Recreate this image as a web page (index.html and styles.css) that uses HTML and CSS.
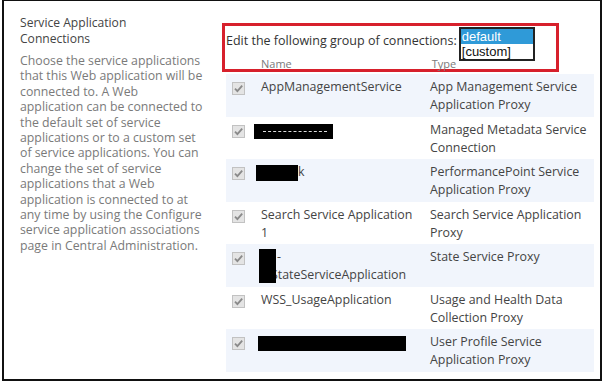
FILE: index.html
```html
<!DOCTYPE html>
<html lang="en">
<head>
    <meta charset="UTF-8">
    <title>Service Application Connections</title>
    <link rel="stylesheet" href="styles.css">
</head>
<body>
    <div class="frame">
        <div class="section-info">
            <h3>Service Application Connections</h3>
            <p>Choose the service applications that this Web application will be connected to. A Web application can be connected to the default set of service applications or to a custom set of service applications. You can change the set of service applications that a Web application is connected to at any time by using the Configure service application associations page in Central Administration.</p>
        </div>
        <div class="section-body">
            <div class="group-box">
                <div class="group-line">
                    <span class="group-label">Edit the following group of connections:</span>
                    <div class="listbox">
                        <div class="opt selected">default</div>
                        <div class="opt">[custom]</div>
                    </div>
                </div>
                <div class="col-heads">
                    <span class="head-name">Name</span>
                    <span class="head-type">Type</span>
                </div>
            </div>

            <div class="rows">
                <div class="row alt">
                    <div class="chk"><svg viewBox="0 0 13 13"><rect x="0.5" y="0.5" width="12" height="12" fill="#e4e4e4" stroke="#c2c2c2"/><path d="M3 6.6 L5.4 9.2 L10.2 3.6" fill="none" stroke="#8a8a8a" stroke-width="1.8"/></svg></div>
                    <div class="name">AppManagementService</div>
                    <div class="type">App Management Service Application Proxy</div>
                </div>
                <div class="row">
                    <div class="chk"><svg viewBox="0 0 13 13"><rect x="0.5" y="0.5" width="12" height="12" fill="#e4e4e4" stroke="#c2c2c2"/><path d="M3 6.6 L5.4 9.2 L10.2 3.6" fill="none" stroke="#8a8a8a" stroke-width="1.8"/></svg></div>
                    <div class="name"><span class="redact r-mm"><span class="dash"></span></span></div>
                    <div class="type">Managed Metadata Service Connection</div>
                </div>
                <div class="row alt">
                    <div class="chk"><svg viewBox="0 0 13 13"><rect x="0.5" y="0.5" width="12" height="12" fill="#e4e4e4" stroke="#c2c2c2"/><path d="M3 6.6 L5.4 9.2 L10.2 3.6" fill="none" stroke="#8a8a8a" stroke-width="1.8"/></svg></div>
                    <div class="name"><span class="redact r-pp"></span>k</div>
                    <div class="type">PerformancePoint Service Application Proxy</div>
                </div>
                <div class="row">
                    <div class="chk"><svg viewBox="0 0 13 13"><rect x="0.5" y="0.5" width="12" height="12" fill="#e4e4e4" stroke="#c2c2c2"/><path d="M3 6.6 L5.4 9.2 L10.2 3.6" fill="none" stroke="#8a8a8a" stroke-width="1.8"/></svg></div>
                    <div class="name">Search Service Application 1</div>
                    <div class="type">Search Service Application Proxy</div>
                </div>
                <div class="row alt">
                    <div class="chk"><svg viewBox="0 0 13 13"><rect x="0.5" y="0.5" width="12" height="12" fill="#e4e4e4" stroke="#c2c2c2"/><path d="M3 6.6 L5.4 9.2 L10.2 3.6" fill="none" stroke="#8a8a8a" stroke-width="1.8"/></svg></div>
                    <div class="name covered"><span class="dash-first">-</span><br><span class="second-line">StateServiceApplication</span><span class="redact r-ss"></span></div>
                    <div class="type">State Service Proxy</div>
                </div>
                <div class="row">
                    <div class="chk"><svg viewBox="0 0 13 13"><rect x="0.5" y="0.5" width="12" height="12" fill="#e4e4e4" stroke="#c2c2c2"/><path d="M3 6.6 L5.4 9.2 L10.2 3.6" fill="none" stroke="#8a8a8a" stroke-width="1.8"/></svg></div>
                    <div class="name">WSS_UsageApplication</div>
                    <div class="type">Usage and Health Data Collection Proxy</div>
                </div>
                <div class="row alt">
                    <div class="chk"><svg viewBox="0 0 13 13"><rect x="0.5" y="0.5" width="12" height="12" fill="#e4e4e4" stroke="#c2c2c2"/><path d="M3 6.6 L5.4 9.2 L10.2 3.6" fill="none" stroke="#8a8a8a" stroke-width="1.8"/></svg></div>
                    <div class="name"><span class="redact r-up"></span></div>
                    <div class="type">User Profile Service Application Proxy</div>
                </div>
            </div>
        </div>
    </div>
</body>
</html>
```

FILE: styles.css
```css
html, body {
    margin: 0;
    padding: 0;
    background: #fff;
}
body {
    font-family: "Open Sans", "Noto Sans", sans-serif;
    color: #444;
}
.frame {
    box-sizing: border-box;
    width: 600px;
    height: 381px;
    margin-left: 2px;
    border: 2px solid #111;
    border-top-width: 1px;
    display: flex;
}
.section-info {
    width: 182px;
    padding: 14px 0 0 16px;
    box-sizing: content-box;
}
.section-info h3 {
    margin: 0;
    max-width: 150px;
    font-size: 12.1px;
    font-weight: normal;
    line-height: 16px;
    color: #444;
}
.section-info p {
    margin: 6px 0 0;
    width: 184px;
    font-size: 12.3px;
    line-height: 15.4px;
    color: #7a7a7a;
}
.section-body {
    margin-left: 24px;
    width: 368px;
    padding-top: 22px;
}
.group-box {
    box-sizing: border-box;
    width: 337px;
    height: 49px;
    margin-left: -4px;
    border: 3px solid #d7202c;
    padding: 1px 0 0 1px;
}
.group-line {
    display: flex;
    align-items: flex-start;
}
.group-label {
    font-size: 12.5px;
    color: #333;
    line-height: 18px;
    margin-top: 5px;
}
.listbox {
    margin-left: 2px;
    width: 72px;
    border: 2px solid #222;
    font-family: "Liberation Sans", Arial, sans-serif;
    font-size: 13px;
    line-height: 15px;
    color: #111;
}
.opt {
    padding-left: 1px;
}
.opt.selected {
    background: #2f9ad8;
    color: #fff;
}
.col-heads {
    display: flex;
    font-size: 11px;
    color: #7a7a7a;
    line-height: 12px;
    margin-top: -3px;
}
.head-name {
    margin-left: 35px;
}
.head-type {
    margin-left: 140px;
}
.rows {
    margin-top: 2px;
}
.row {
    display: grid;
    grid-template-columns: 35px 169px 1fr;
    height: 42.5px;
    box-sizing: border-box;
    padding-top: 4px;
    font-size: 12.4px;
    line-height: 18px;
}
.row.alt {
    background: #f1f5fc;
}
.chk {
    padding: 4px 0 0 6px;
}
.chk svg {
    width: 13px;
    height: 13px;
    display: block;
}
.name {
    padding-right: 13px;
}
.redact {
    display: inline-block;
    background: #000;
    vertical-align: top;
}
.r-mm {
    width: 79px;
    height: 15px;
    margin: 3px 0 0 -7px;
    position: relative;
}
.dash {
    position: absolute;
    left: 9px;
    right: 6px;
    top: 7px;
    border-top: 1px dashed #ddd;
}
.r-pp {
    width: 42px;
    height: 16px;
    margin: 2px 0 0 -5px;
}
.r-up {
    width: 148px;
    height: 15px;
    margin: 3px 0 0 -3px;
}
.covered {
    position: relative;
}
.dash-first {
    margin-left: 16px;
}
.second-line {
    margin-left: 10px;
    white-space: nowrap;
}
.r-ss {
    position: absolute;
    left: -2px;
    top: 1px;
    width: 17px;
    height: 34px;
}
```
